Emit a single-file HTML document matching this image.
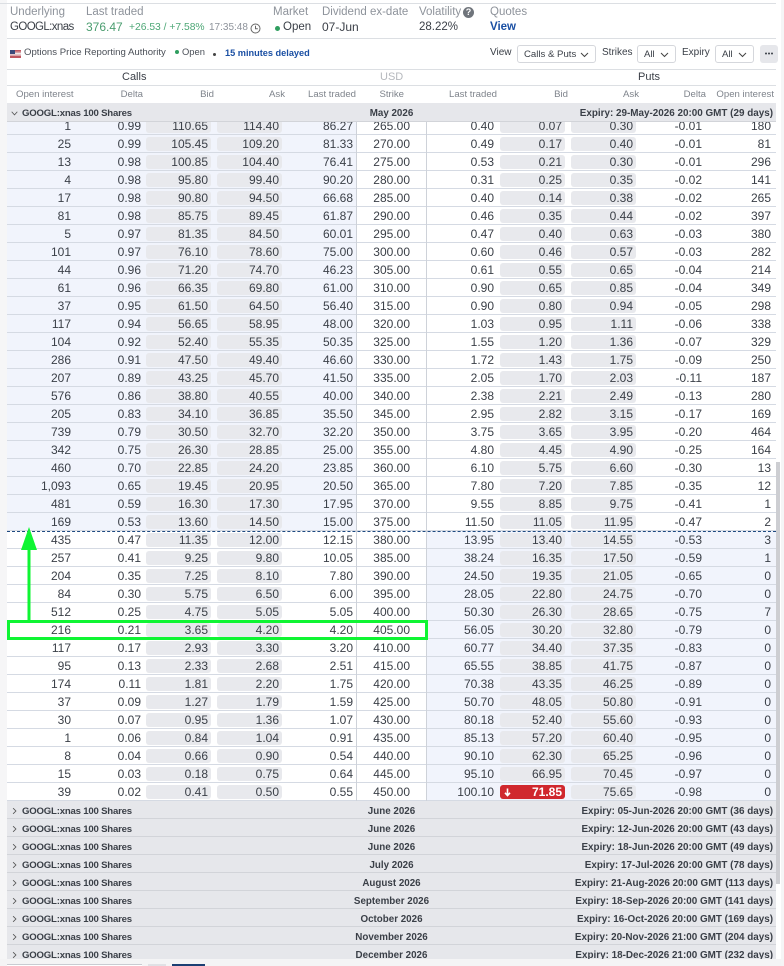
<!DOCTYPE html>
<html><head><meta charset="utf-8"><style>
*{box-sizing:border-box}
html,body{margin:0;padding:0;background:#fff}
body{width:784px;height:966px;overflow:hidden;position:relative;font-family:"Liberation Sans",sans-serif;font-size:12px;color:#3a3f47}
.a{position:absolute;white-space:nowrap}
.g{color:#8e939b}
#rows{position:absolute;left:7px;top:117px;width:769px;height:684px;overflow:hidden}
.r{position:relative;height:18px;border-bottom:1px solid #d5dae3;background:linear-gradient(#fff,#fff)}
.c{background:linear-gradient(90deg,#f1f4fc 0,#f1f4fc 349px,#fff 349px)}
.p{background:linear-gradient(90deg,#fff 0,#fff 420px,#f1f4fc 420px)}
.r:before{content:"";position:absolute;left:349px;top:0;width:1px;height:18px;background:#ced2d9}
.r:after{content:"";position:absolute;left:419px;top:0;width:1px;height:18px;background:#ced2d9}
.r span{position:absolute;top:2px;line-height:15px;text-align:right;white-space:nowrap}
.r span:nth-child(1){right:705px}
.r span:nth-child(2){right:635px}
.r span:nth-child(3),.r span:nth-child(4),.r span:nth-child(8),.r span:nth-child(9){top:2px;height:14px;line-height:15px;width:65px;background:#e8e9ed;border-radius:3px;padding-right:3px}
.r span:nth-child(3){left:139px}
.r span:nth-child(4){left:210px}
.r span:nth-child(5){right:423px}
.r span:nth-child(6){right:366px}
.r span:nth-child(7){right:282px}
.r span:nth-child(8){left:493px}
.r span:nth-child(9){left:564px}
.r span:nth-child(10){right:74px}
.r span:nth-child(11){right:5px}
.h{position:absolute;left:7px;width:769px;height:18px;background:#e6e7eb;border-bottom:1px solid #d2d4d9;font-size:9.8px;font-weight:bold;color:#3a3f47;line-height:22px}
.h i{position:absolute;font-style:normal;white-space:nowrap}
.h .s{left:15px;font-size:9.6px;letter-spacing:-.2px}
.h .m{left:0;width:769px;text-align:center}
.h .e{right:3px;font-size:9.9px}
.h svg{position:absolute;left:5px;top:6px}
.th{position:absolute;top:88px;line-height:14px;font-size:9.6px;color:#7f848c;white-space:nowrap}
.sel{position:absolute;top:45px;height:18px;border:1px solid #d5d7dc;border-radius:3px;font-size:9.6px;line-height:17px;padding-left:6px;color:#3a3f47;background:#fff}
.sel svg{position:absolute;right:6px;top:6px}
</style></head><body>
<div class="a" style="left:0;top:0;width:7px;height:966px;background:#f6f6f7"></div>
<div class="a" style="left:0;top:3px;width:776px;height:1px;background:#dcdfe3"></div>
<div class="a g" style="left:10px;top:5px;line-height:15px;font-size:11.5px">Underlying</div>
<div class="a g" style="left:86px;top:5px;line-height:15px;font-size:11.5px">Last traded</div>
<div class="a g" style="left:273px;top:5px;line-height:15px;font-size:11.5px">Market</div>
<div class="a g" style="left:322px;top:5px;line-height:15px;font-size:11.5px">Dividend ex-date</div>
<div class="a g" style="left:419px;top:5px;line-height:15px;font-size:11.5px">Volatility</div>
<div class="a" style="left:463px;top:7px;width:11px;height:11px;border-radius:50%;background:#6f747b;color:#fff;font-size:9px;line-height:11px;text-align:center;font-weight:bold">?</div>
<div class="a g" style="left:490px;top:5px;line-height:15px;font-size:11.5px">Quotes</div>
<div class="a" style="left:10px;top:20px;line-height:15px;font-size:11.5px;letter-spacing:-.6px">GOOGL:xnas</div>
<div class="a" style="left:86px;top:20px;line-height:15px;font-size:12px;color:#4a9d6f">376.47</div>
<div class="a" style="left:129px;top:21px;line-height:14px;font-size:10.3px;color:#4da776">+26.53 / +7.58%</div>
<div class="a g" style="left:209px;top:21px;line-height:14px;font-size:10px">17:35:48</div>
<svg class="a" style="left:250px;top:23px" width="11" height="11" viewBox="0 0 11 11" fill="none" stroke="#666" stroke-width="1"><circle cx="5.5" cy="5.5" r="4.5"/><path d="M5.5 2.8V5.8H7.8"/></svg>
<div class="a" style="left:275px;top:26px;width:5px;height:5px;border-radius:50%;background:#2f9e5f"></div>
<div class="a" style="left:283px;top:20px;line-height:15px;font-size:11.5px">Open</div>
<div class="a" style="left:322px;top:20px;line-height:15px;font-size:12px">07-Jun</div>
<div class="a" style="left:419px;top:20px;line-height:15px;font-size:11.5px">28.22%</div>
<div class="a" style="left:490px;top:20px;line-height:15px;font-size:11.5px;font-weight:bold;color:#1a4fa3">View</div>
<div class="a" style="left:7px;top:38px;width:769px;height:1px;background:#dcdfe3"></div>

<svg class="a" style="left:10px;top:50px" width="11" height="8" viewBox="0 0 11 8"><rect width="11" height="8" fill="#d8a3a8"/><rect y="0" width="11" height="1.5" fill="#c0565f"/><rect y="3" width="11" height="1.5" fill="#f0e6e6"/><rect y="6" width="11" height="2" fill="#c0565f"/><rect width="5" height="4" fill="#3c4a7a"/></svg>
<div class="a" style="left:24px;top:46px;line-height:14px;font-size:9.6px;color:#4a4f57">Options Price Reporting Authority</div>
<div class="a" style="left:175px;top:50px;width:4px;height:4px;border-radius:50%;background:#2f9e5f"></div>
<div class="a" style="left:182px;top:45px;line-height:14px;font-size:9.4px;color:#4a4f57">Open</div>
<div class="a" style="left:213px;top:53px;width:3px;height:3px;border-radius:50%;background:#444"></div>
<div class="a" style="left:225px;top:46px;line-height:14px;font-size:9.2px;font-weight:bold;color:#1a4fa3">15 minutes delayed</div>

<div class="a" style="left:490px;top:46px;line-height:14px;font-size:10px">View</div>
<div class="sel" style="left:517px;width:79px">Calls &amp; Puts<svg width="9" height="6" viewBox="0 0 9 6" fill="none" stroke="#444" stroke-width="1"><path d="M1 1L4.5 4.5L8 1"/></svg></div>
<div class="a" style="left:602px;top:46px;line-height:14px;font-size:10px">Strikes</div>
<div class="sel" style="left:637px;width:39px">All<svg width="9" height="6" viewBox="0 0 9 6" fill="none" stroke="#444" stroke-width="1"><path d="M1 1L4.5 4.5L8 1"/></svg></div>
<div class="a" style="left:682px;top:46px;line-height:14px;font-size:10px">Expiry</div>
<div class="sel" style="left:715px;width:39px">All<svg width="9" height="6" viewBox="0 0 9 6" fill="none" stroke="#444" stroke-width="1"><path d="M1 1L4.5 4.5L8 1"/></svg></div>
<div class="a" style="left:760px;top:45px;width:18px;height:18px;background:#e6e7eb;border-radius:3px"></div>
<svg class="a" style="left:765px;top:52px" width="8" height="3" viewBox="0 0 8 3" fill="#3a3f47"><circle cx="1" cy="1.5" r="1"/><circle cx="4" cy="1.5" r="1"/><circle cx="7" cy="1.5" r="1"/></svg>

<div class="a" style="left:7px;top:69px;width:769px;height:1px;background:#dcdfe3"></div>
<div class="a" style="left:122px;top:70px;line-height:15px;font-size:11px">Calls</div>
<div class="a" style="left:380px;top:70px;line-height:15px;font-size:11px;color:#b5b8bd">USD</div>
<div class="a" style="left:638px;top:70px;line-height:15px;font-size:11px">Puts</div>
<div class="a" style="left:7px;top:85px;width:769px;height:1px;background:#dcdfe3"></div>
<div class="th" style="left:16px">Open interest</div>
<div class="th" style="right:641px">Delta</div>
<div class="th" style="right:570px">Bid</div>
<div class="th" style="right:499px">Ask</div>
<div class="th" style="right:428px">Last traded</div>
<div class="th" style="right:380px">Strike</div>
<div class="th" style="right:287px">Last traded</div>
<div class="th" style="right:216px">Bid</div>
<div class="th" style="right:145px">Ask</div>
<div class="th" style="right:78px">Delta</div>
<div class="th" style="right:10px">Open interest</div>

<div id="rows">
<div class="r c"><span>1</span><span>0.99</span><span>110.65</span><span>114.40</span><span>86.27</span><span>265.00</span><span>0.40</span><span>0.07</span><span>0.30</span><span>-0.01</span><span>180</span></div>
<div class="r c"><span>25</span><span>0.99</span><span>105.45</span><span>109.20</span><span>81.33</span><span>270.00</span><span>0.49</span><span>0.17</span><span>0.40</span><span>-0.01</span><span>81</span></div>
<div class="r c"><span>13</span><span>0.98</span><span>100.85</span><span>104.40</span><span>76.41</span><span>275.00</span><span>0.53</span><span>0.21</span><span>0.30</span><span>-0.01</span><span>296</span></div>
<div class="r c"><span>4</span><span>0.98</span><span>95.80</span><span>99.40</span><span>90.20</span><span>280.00</span><span>0.31</span><span>0.25</span><span>0.35</span><span>-0.02</span><span>141</span></div>
<div class="r c"><span>17</span><span>0.98</span><span>90.80</span><span>94.50</span><span>66.68</span><span>285.00</span><span>0.40</span><span>0.14</span><span>0.38</span><span>-0.02</span><span>265</span></div>
<div class="r c"><span>81</span><span>0.98</span><span>85.75</span><span>89.45</span><span>61.87</span><span>290.00</span><span>0.46</span><span>0.35</span><span>0.44</span><span>-0.02</span><span>397</span></div>
<div class="r c"><span>5</span><span>0.97</span><span>81.35</span><span>84.50</span><span>60.01</span><span>295.00</span><span>0.47</span><span>0.40</span><span>0.63</span><span>-0.03</span><span>380</span></div>
<div class="r c"><span>101</span><span>0.97</span><span>76.10</span><span>78.60</span><span>75.00</span><span>300.00</span><span>0.60</span><span>0.46</span><span>0.57</span><span>-0.03</span><span>282</span></div>
<div class="r c"><span>44</span><span>0.96</span><span>71.20</span><span>74.70</span><span>46.23</span><span>305.00</span><span>0.61</span><span>0.55</span><span>0.65</span><span>-0.04</span><span>214</span></div>
<div class="r c"><span>61</span><span>0.96</span><span>66.35</span><span>69.80</span><span>61.00</span><span>310.00</span><span>0.90</span><span>0.65</span><span>0.85</span><span>-0.04</span><span>349</span></div>
<div class="r c"><span>37</span><span>0.95</span><span>61.50</span><span>64.50</span><span>56.40</span><span>315.00</span><span>0.90</span><span>0.80</span><span>0.94</span><span>-0.05</span><span>298</span></div>
<div class="r c"><span>117</span><span>0.94</span><span>56.65</span><span>58.95</span><span>48.00</span><span>320.00</span><span>1.03</span><span>0.95</span><span>1.11</span><span>-0.06</span><span>338</span></div>
<div class="r c"><span>104</span><span>0.92</span><span>52.40</span><span>55.35</span><span>50.35</span><span>325.00</span><span>1.55</span><span>1.20</span><span>1.36</span><span>-0.07</span><span>329</span></div>
<div class="r c"><span>286</span><span>0.91</span><span>47.50</span><span>49.40</span><span>46.60</span><span>330.00</span><span>1.72</span><span>1.43</span><span>1.75</span><span>-0.09</span><span>250</span></div>
<div class="r c"><span>207</span><span>0.89</span><span>43.25</span><span>45.70</span><span>41.50</span><span>335.00</span><span>2.05</span><span>1.70</span><span>2.03</span><span>-0.11</span><span>187</span></div>
<div class="r c"><span>576</span><span>0.86</span><span>38.80</span><span>40.55</span><span>40.00</span><span>340.00</span><span>2.38</span><span>2.21</span><span>2.49</span><span>-0.13</span><span>280</span></div>
<div class="r c"><span>205</span><span>0.83</span><span>34.10</span><span>36.85</span><span>35.50</span><span>345.00</span><span>2.95</span><span>2.82</span><span>3.15</span><span>-0.17</span><span>169</span></div>
<div class="r c"><span>739</span><span>0.79</span><span>30.50</span><span>32.70</span><span>32.20</span><span>350.00</span><span>3.75</span><span>3.65</span><span>3.95</span><span>-0.20</span><span>464</span></div>
<div class="r c"><span>342</span><span>0.75</span><span>26.30</span><span>28.85</span><span>25.00</span><span>355.00</span><span>4.80</span><span>4.45</span><span>4.90</span><span>-0.25</span><span>164</span></div>
<div class="r c"><span>460</span><span>0.70</span><span>22.85</span><span>24.20</span><span>23.85</span><span>360.00</span><span>6.10</span><span>5.75</span><span>6.60</span><span>-0.30</span><span>13</span></div>
<div class="r c"><span>1,093</span><span>0.65</span><span>19.45</span><span>20.95</span><span>20.50</span><span>365.00</span><span>7.80</span><span>7.20</span><span>7.85</span><span>-0.35</span><span>12</span></div>
<div class="r c"><span>481</span><span>0.59</span><span>16.30</span><span>17.30</span><span>17.95</span><span>370.00</span><span>9.55</span><span>8.85</span><span>9.75</span><span>-0.41</span><span>1</span></div>
<div class="r c"><span>169</span><span>0.53</span><span>13.60</span><span>14.50</span><span>15.00</span><span>375.00</span><span>11.50</span><span>11.05</span><span>11.95</span><span>-0.47</span><span>2</span></div>
<div class="r p"><span>435</span><span>0.47</span><span>11.35</span><span>12.00</span><span>12.15</span><span>380.00</span><span>13.95</span><span>13.40</span><span>14.55</span><span>-0.53</span><span>3</span></div>
<div class="r p"><span>257</span><span>0.41</span><span>9.25</span><span>9.80</span><span>10.05</span><span>385.00</span><span>38.24</span><span>16.35</span><span>17.50</span><span>-0.59</span><span>1</span></div>
<div class="r p"><span>204</span><span>0.35</span><span>7.25</span><span>8.10</span><span>7.80</span><span>390.00</span><span>24.50</span><span>19.35</span><span>21.05</span><span>-0.65</span><span>0</span></div>
<div class="r p"><span>84</span><span>0.30</span><span>5.75</span><span>6.50</span><span>6.00</span><span>395.00</span><span>28.05</span><span>22.80</span><span>24.75</span><span>-0.70</span><span>0</span></div>
<div class="r p"><span>512</span><span>0.25</span><span>4.75</span><span>5.05</span><span>5.05</span><span>400.00</span><span>50.30</span><span>26.30</span><span>28.65</span><span>-0.75</span><span>7</span></div>
<div class="r p"><span>216</span><span>0.21</span><span>3.65</span><span>4.20</span><span>4.20</span><span>405.00</span><span>56.05</span><span>30.20</span><span>32.80</span><span>-0.79</span><span>0</span></div>
<div class="r p"><span>117</span><span>0.17</span><span>2.93</span><span>3.30</span><span>3.20</span><span>410.00</span><span>60.77</span><span>34.40</span><span>37.35</span><span>-0.83</span><span>0</span></div>
<div class="r p"><span>95</span><span>0.13</span><span>2.33</span><span>2.68</span><span>2.51</span><span>415.00</span><span>65.55</span><span>38.85</span><span>41.75</span><span>-0.87</span><span>0</span></div>
<div class="r p"><span>174</span><span>0.11</span><span>1.81</span><span>2.20</span><span>1.75</span><span>420.00</span><span>70.38</span><span>43.35</span><span>46.25</span><span>-0.89</span><span>0</span></div>
<div class="r p"><span>37</span><span>0.09</span><span>1.27</span><span>1.79</span><span>1.59</span><span>425.00</span><span>50.70</span><span>48.05</span><span>50.80</span><span>-0.91</span><span>0</span></div>
<div class="r p"><span>30</span><span>0.07</span><span>0.95</span><span>1.36</span><span>1.07</span><span>430.00</span><span>80.18</span><span>52.40</span><span>55.60</span><span>-0.93</span><span>0</span></div>
<div class="r p"><span>1</span><span>0.06</span><span>0.84</span><span>1.04</span><span>0.91</span><span>435.00</span><span>85.13</span><span>57.20</span><span>60.40</span><span>-0.95</span><span>0</span></div>
<div class="r p"><span>8</span><span>0.04</span><span>0.66</span><span>0.90</span><span>0.54</span><span>440.00</span><span>90.10</span><span>62.30</span><span>65.25</span><span>-0.96</span><span>0</span></div>
<div class="r p"><span>15</span><span>0.03</span><span>0.18</span><span>0.75</span><span>0.64</span><span>445.00</span><span>95.10</span><span>66.95</span><span>70.45</span><span>-0.97</span><span>0</span></div>
<div class="r p"><span>39</span><span>0.02</span><span>0.41</span><span>0.50</span><span>0.55</span><span>450.00</span><span>100.10</span><span style="background:#d0282e;color:#fff;font-weight:bold">71.85</span><span>75.65</span><span>-0.98</span><span>0</span></div>
</div>
<svg class="a" style="left:504px;top:788px" width="7" height="9" viewBox="0 0 7 9" fill="none" stroke="#fff" stroke-width="1.6"><path d="M3.5 0.5V7M1 4.8L3.5 7.6L6 4.8"/></svg>

<div class="h" style="top:103px;height:19px"><svg width="7" height="5" style="left:4px;top:8px" viewBox="0 0 10 7" fill="none" stroke="#555" stroke-width="1.2"><path d="M1 1L5 5.5L9 1"/></svg><i class="s">GOOGL:xnas 100 Shares</i><i class="m">May 2026</i><i class="e">Expiry: 29-May-2026 20:00 GMT (29 days)</i></div>

<div class="a" style="left:7px;top:531px;width:769px;height:0;border-top:1px dashed #1f4a80"></div>

<div class="h" style="top:801px"><svg width="5" height="8" viewBox="0 0 7 9" fill="none" stroke="#555" stroke-width="1.2"><path d="M1.5 0.5L5.5 4.5L1.5 8.5"/></svg><i class="s">GOOGL:xnas 100 Shares</i><i class="m">June 2026</i><i class="e">Expiry: 05-Jun-2026 20:00 GMT (36 days)</i></div>
<div class="h" style="top:819px"><svg width="5" height="8" viewBox="0 0 7 9" fill="none" stroke="#555" stroke-width="1.2"><path d="M1.5 0.5L5.5 4.5L1.5 8.5"/></svg><i class="s">GOOGL:xnas 100 Shares</i><i class="m">June 2026</i><i class="e">Expiry: 12-Jun-2026 20:00 GMT (43 days)</i></div>
<div class="h" style="top:837px"><svg width="5" height="8" viewBox="0 0 7 9" fill="none" stroke="#555" stroke-width="1.2"><path d="M1.5 0.5L5.5 4.5L1.5 8.5"/></svg><i class="s">GOOGL:xnas 100 Shares</i><i class="m">June 2026</i><i class="e">Expiry: 18-Jun-2026 20:00 GMT (49 days)</i></div>
<div class="h" style="top:855px"><svg width="5" height="8" viewBox="0 0 7 9" fill="none" stroke="#555" stroke-width="1.2"><path d="M1.5 0.5L5.5 4.5L1.5 8.5"/></svg><i class="s">GOOGL:xnas 100 Shares</i><i class="m">July 2026</i><i class="e">Expiry: 17-Jul-2026 20:00 GMT (78 days)</i></div>
<div class="h" style="top:873px"><svg width="5" height="8" viewBox="0 0 7 9" fill="none" stroke="#555" stroke-width="1.2"><path d="M1.5 0.5L5.5 4.5L1.5 8.5"/></svg><i class="s">GOOGL:xnas 100 Shares</i><i class="m">August 2026</i><i class="e">Expiry: 21-Aug-2026 20:00 GMT (113 days)</i></div>
<div class="h" style="top:891px"><svg width="5" height="8" viewBox="0 0 7 9" fill="none" stroke="#555" stroke-width="1.2"><path d="M1.5 0.5L5.5 4.5L1.5 8.5"/></svg><i class="s">GOOGL:xnas 100 Shares</i><i class="m">September 2026</i><i class="e">Expiry: 18-Sep-2026 20:00 GMT (141 days)</i></div>
<div class="h" style="top:909px"><svg width="5" height="8" viewBox="0 0 7 9" fill="none" stroke="#555" stroke-width="1.2"><path d="M1.5 0.5L5.5 4.5L1.5 8.5"/></svg><i class="s">GOOGL:xnas 100 Shares</i><i class="m">October 2026</i><i class="e">Expiry: 16-Oct-2026 20:00 GMT (169 days)</i></div>
<div class="h" style="top:927px"><svg width="5" height="8" viewBox="0 0 7 9" fill="none" stroke="#555" stroke-width="1.2"><path d="M1.5 0.5L5.5 4.5L1.5 8.5"/></svg><i class="s">GOOGL:xnas 100 Shares</i><i class="m">November 2026</i><i class="e">Expiry: 20-Nov-2026 21:00 GMT (204 days)</i></div>
<div class="h" style="top:945px;height:14px;border:0;overflow:hidden"><svg width="5" height="8" viewBox="0 0 7 9" fill="none" stroke="#555" stroke-width="1.2"><path d="M1.5 0.5L5.5 4.5L1.5 8.5"/></svg><i class="s">GOOGL:xnas 100 Shares</i><i class="m">December 2026</i><i class="e">Expiry: 18-Dec-2026 21:00 GMT (232 days)</i></div>

<div class="a" style="left:0;top:959px;width:784px;height:7px;background:#f4f4f5"></div>
<div class="a" style="left:7px;top:964px;width:135px;height:2px;background:#fff;border-top:1px solid #c9ccd2"></div>
<div class="a" style="left:148px;top:964px;width:18px;height:2px;background:#e0e1e5"></div>
<div class="a" style="left:172px;top:964px;width:33px;height:2px;background:#1b3f73"></div>

<div class="a" style="left:776px;top:462px;width:4px;height:422px;background:#cdced2"></div>
<div class="a" style="left:781px;top:0;width:3px;height:966px;background:#f5f5f6"></div>

<div class="a" style="left:7px;top:620px;width:421px;height:20px;border:3px solid #0ff533"></div>
<svg class="a" style="left:20px;top:526px" width="20" height="97" viewBox="0 0 20 97"><path d="M9 23V96" stroke="#0ff533" stroke-width="3" fill="none"/><path d="M9 1L17 24H1Z" fill="#0ff533"/></svg>
</body></html>
